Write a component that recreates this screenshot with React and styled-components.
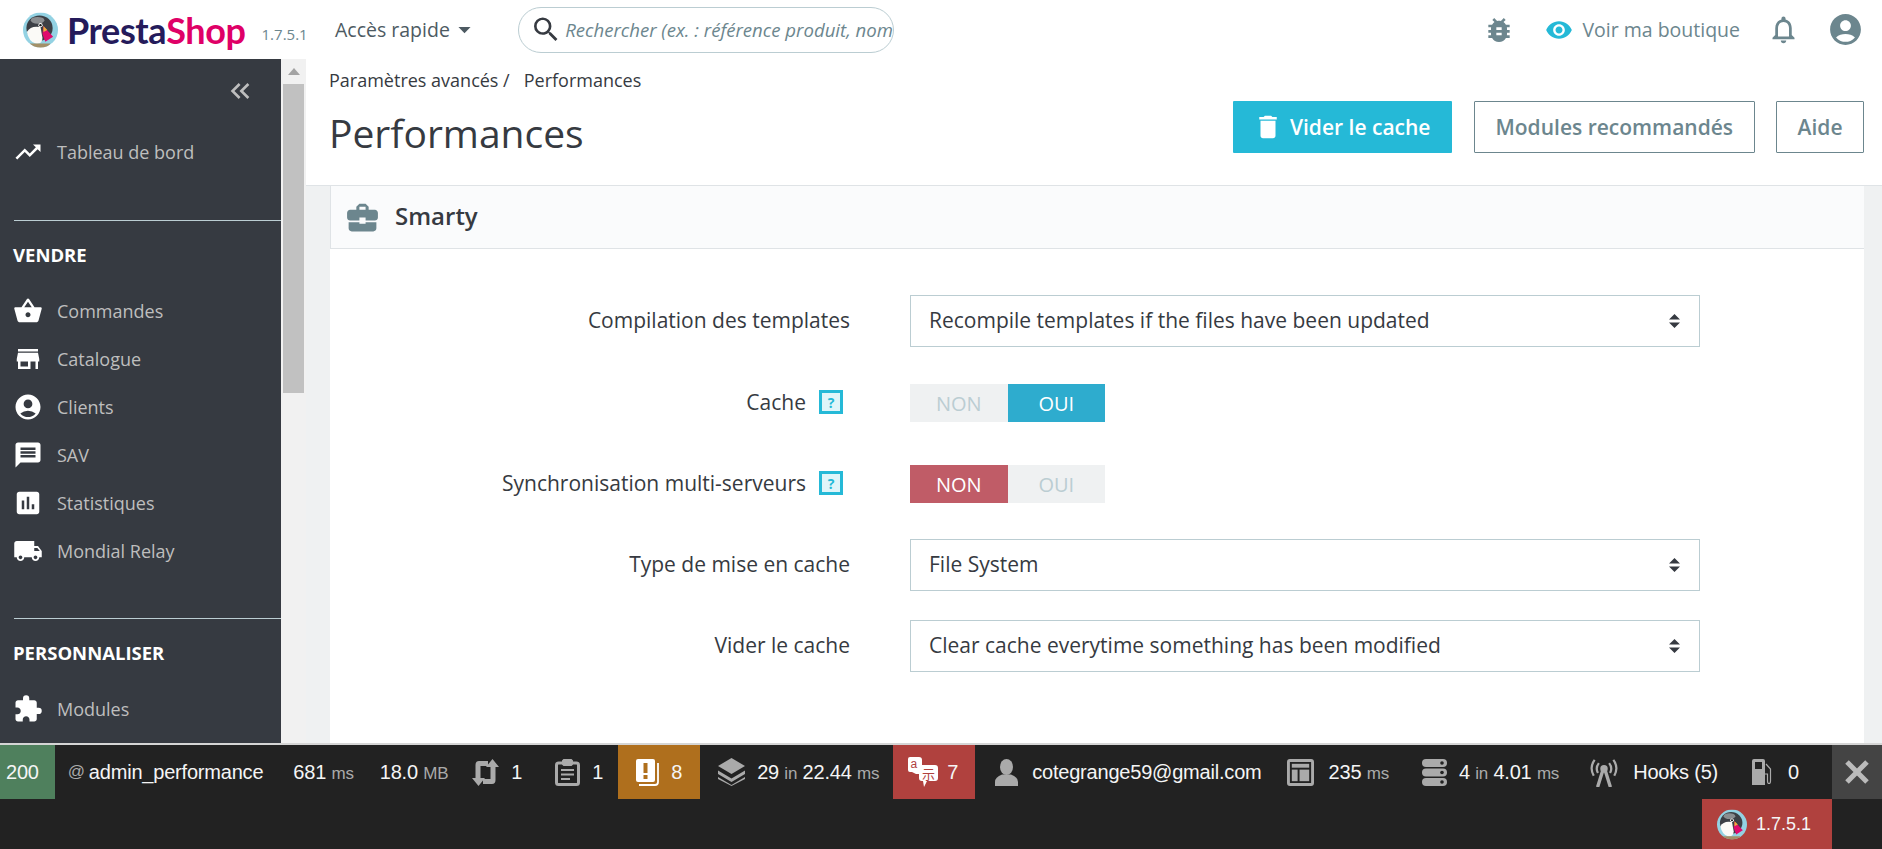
import React from 'react';
import styled, { createGlobalStyle } from 'styled-components';
import {
  MdTrendingUp, MdShoppingBasket, MdStore, MdAccountCircle, MdMessage, MdAssessment,
  MdLocalShipping, MdExtension, MdBugReport, MdVisibility, MdNotificationsNone, MdSearch,
  MdArrowDropDown, MdDelete, MdBusinessCenter, MdKeyboardDoubleArrowLeft, MdDesktopMac,
} from 'react-icons/md';

const GlobalStyle = createGlobalStyle`
  html, body { margin: 0; padding: 0; height: 100%; overflow: hidden; }
  body { font-family: "Open Sans", sans-serif; background: #fff; color: #363a41; }
  #root { height: 100%; }
`;

const Page = styled.div`
  width: 1882px;
  height: 849px;
  display: flex;
  flex-direction: column;
  overflow: hidden;
`;

const TopBar = styled.header`
  flex: 0 0 59px;
  display: flex;
  align-items: center;
  padding: 0 18px 0 23px;
  background: #fff;
`;

const Logo = styled.div`
  display: flex;
  align-items: center;
  width: 312px;
  flex: none;
`;

const LogoWord = styled.span`
  font-family: Lato, sans-serif;
  font-size: 36px;
  font-weight: 700;
  letter-spacing: -0.4px;
  line-height: 1;
  color: ${(p) => (p.$pink ? '#df0067' : '#251b5b')};
  margin-left: ${(p) => (p.$pink ? '0' : '9px')};
`;

const Version = styled.span`
  margin-left: 16px;
  font-size: 15px;
  color: #6c868e;
  padding-top: 8px;
`;

const QuickAccess = styled.div`
  display: flex;
  align-items: center;
  width: 183px;
  flex: none;
  font-size: 19.5px;
  color: #4d5a62;
`;

const SearchBox = styled.div`
  width: 376px;
  height: 46px;
  box-sizing: border-box;
  flex: none;
  border: 1px solid #bbcdd2;
  border-radius: 23px;
  display: flex;
  align-items: center;
  padding-left: 11px;
  gap: 3px;
  overflow: hidden;
  font-size: 18.6px;
  font-style: italic;
  color: #6c868e;
  white-space: nowrap;
`;

const TopRight = styled.div`
  margin-left: auto;
  display: flex;
  align-items: center;
  gap: 27px;
  color: #6c868e;
`;

const ShopLink = styled.span`
  display: flex;
  align-items: center;
  gap: 9px;
  margin-left: 3px;
  font-size: 19.5px;
  color: #6c868e;
`;

const Body = styled.div`
  flex: 1;
  display: flex;
  min-height: 0;
`;

const Sidebar = styled.nav`
  width: 281px;
  flex: none;
  background: #363a41;
  overflow: hidden;
`;

const Collapse = styled.div`
  height: 46px;
  box-sizing: border-box;
  padding: 16px 25px 0 0;
  margin-bottom: 23px;
  display: flex;
  justify-content: flex-end;
  color: #bebebe;
`;

const NavItem = styled.div`
  height: 48px;
  flex: none;
  display: flex;
  align-items: center;
  padding-left: 13px;
  gap: 14px;
  font-size: 18px;
  color: #bebebe;
  svg { color: #fff; flex: none; }
`;

const Divider = styled.hr`
  border: 0;
  height: 1px;
  background: #bbcdd2;
  margin: ${(p) => p.$top}px 0 0 14px;
`;

const NavHeading = styled.div`
  font-size: 18.5px;
  font-weight: 700;
  color: #fff;
  height: 24px;
  line-height: 24px;
  margin: 22px 0 20px 13px;
`;

const Scrollbar = styled.div`
  width: 25px;
  flex: none;
  background: #f1f1f1;
  display: flex;
  flex-direction: column;
  padding-left: 2px;
  box-sizing: border-box;
`;

const ScrollArrow = styled.div`
  height: 24px;
  flex: none;
  display: flex;
  align-items: center;
  justify-content: center;
  width: 21px;
  &::before {
    content: '';
    border-left: 6px solid transparent;
    border-right: 6px solid transparent;
    border-bottom: 7px solid #a3a3a3;
  }
`;

const ScrollThumb = styled.div`
  width: 21px;
  height: 309px;
  margin-top: 1px;
  background: #c1c1c1;
`;

const Main = styled.main`
  flex: 1;
  min-width: 0;
  display: flex;
  flex-direction: column;
  background: #eff1f2;
`;

const ContentHeader = styled.div`
  height: 126px;
  box-sizing: content-box;
  background: #fff;
  border-bottom: 1px solid #dfe3e6;
  padding: 0 18px 0 23px;
  display: flex;
  flex-direction: column;
`;

const Breadcrumb = styled.div`
  margin-top: 13px;
  font-size: 18px;
  line-height: 17px;
  color: #363a41;
  span { margin-left: 14px; }
`;

const TitleRow = styled.div`
  display: flex;
  align-items: flex-start;
  justify-content: space-between;
  margin-top: 12px;
`;

const Title = styled.h1`
  margin: 5px 0 0;
  font-size: 39px;
  font-weight: 400;
  line-height: 54px;
  color: #363a41;
`;

const Actions = styled.div`
  display: flex;
  gap: 21.5px;
`;

const ActionButton = styled.button`
  height: 52px;
  box-sizing: border-box;
  padding: ${(p) => (p.$primary ? '0 22px 0 20px' : '0 20.5px')};
  display: flex;
  align-items: center;
  gap: 7px;
  font-family: inherit;
  font-size: 21px;
  font-weight: 600;
  background: ${(p) => (p.$primary ? '#25b9d7' : '#fff')};
  color: ${(p) => (p.$primary ? '#fff' : '#6c868e')};
  border: ${(p) => (p.$primary ? '0' : '1px solid #6c868e')};
  border-radius: 1px;
`;

const Card = styled.section`
  flex: 1;
  margin: 0 18px 0 24px;
  background: #fff;
`;

const CardHeader = styled.div`
  height: 62px;
  display: flex;
  align-items: center;
  gap: 14px;
  padding-left: 13px;
  background: #fafbfc;
  border-bottom: 1px solid #dfe3e6;
  border-left: 1px solid #dfe3e6;
  font-size: 24px;
  font-weight: 600;
  color: #363a41;
  svg { color: #6c868e; }
`;

const CardTitle = styled.span`
  margin-bottom: 4px;
`;

const Form = styled.div`
  padding-top: 46px;
  display: grid;
  grid-template-columns: 520px 1fr;
  column-gap: 60px;
`;

const Label = styled.div`
  display: flex;
  align-items: center;
  justify-content: flex-end;
  gap: 13px;
  font-size: 21px;
  color: #363a41;
  height: ${(p) => p.$h}px;
  margin-bottom: ${(p) => p.$gap}px;
  padding-bottom: 2px;
  box-sizing: border-box;
  white-space: nowrap;
`;

const FormControl = styled.div`
  height: ${(p) => p.$h}px;
  margin-bottom: ${(p) => p.$gap}px;
  display: flex;
  align-items: center;
`;

const Select = styled.div`
  width: 790px;
  height: 52px;
  box-sizing: border-box;
  border: 1px solid #bbcdd2;
  display: flex;
  align-items: center;
  justify-content: space-between;
  padding: 0 18px 2px;
  font-size: 21px;
  color: #363a41;
`;

const HelpBox = styled.span`
  width: 24px;
  height: 24px;
  margin-right: 7px;
  box-sizing: border-box;
  border: 3px solid #25b9d7;
  background: #dff5f9;
  color: #25b9d7;
  font-size: 14px;
  font-weight: 700;
  display: flex;
  align-items: center;
  justify-content: center;
`;

const Switch = styled.div`
  display: flex;
  width: 195px;
  height: 38px;
`;

const SwitchOption = styled.span`
  flex: 1;
  display: flex;
  align-items: center;
  justify-content: center;
  font-size: 20px;
  background: ${(p) => p.$on || '#eff1f2'};
  color: ${(p) => (p.$on ? '#fff' : '#bbcdd2')};
`;

const DebugBar = styled.footer`
  flex: 0 0 106px;
  background: #222;
  border-top: 2px solid #d5d5d5;
  box-sizing: border-box;
  font-family: "Liberation Sans", Arial, sans-serif;
  font-size: 20px;
  color: #f5f5f5;
  display: flex;
  flex-direction: column;
  letter-spacing: -0.2px;
`;

const DebugRow = styled.div`
  height: 54px;
  flex: none;
  display: flex;
  align-items: stretch;
`;

const DebugCell = styled.div`
  display: flex;
  align-items: center;
  gap: ${(p) => p.$gap ?? 12}px;
  padding: 0 ${(p) => p.$r ?? 15}px 0 ${(p) => p.$l ?? 15}px;
  background: ${(p) => p.$bg || 'transparent'};
  white-space: pre;
  svg { flex: none; }
`;

const Unit = styled.small`
  font-size: 17px;
  color: #aaa;
`;

const CloseCell = styled.div`
  margin-left: auto;
  width: 50px;
  background: #444;
  display: flex;
  align-items: center;
  justify-content: center;
`;

const VersionBadge = styled.div`
  align-self: flex-end;
  margin-right: 50px;
  width: 130px;
  height: 50px;
  box-sizing: border-box;
  background: #b0413e;
  display: flex;
  align-items: center;
  gap: 9px;
  padding-left: 15px;
  font-size: 18px;
  letter-spacing: 0;
`;

const grey = '#aaa';

const Puffin = ({ w, h }) => (
  <svg width={w} height={h} viewBox="0 0 36 36">
    <defs>
      <clipPath id="puffin-clip"><circle cx="18" cy="18" r="18" /></clipPath>
    </defs>
    <g clipPath="url(#puffin-clip)">
      <rect width="36" height="36" fill="#93d2e3" />
      <ellipse cx="17" cy="16" rx="13.5" ry="13" fill="#3c3f45" />
      <ellipse cx="15" cy="8" rx="7" ry="3.5" fill="#8a8d90" />
      <path d="M4 20 Q8 13 18 15 L20 26 Q20 33 13 32 Q6 30 4 20Z" fill="#fbfaf7" />
      <circle cx="18" cy="13" r="2.2" fill="#fff" />
      <circle cx="18" cy="13" r="1.2" fill="#111" />
      <path d="M21 14 L31 25 L23 30 L20 22Z" fill="#df0a6c" />
      <path d="M21 14 L25 18 L21 20Z" fill="#e8b23a" />
      <path d="M7 32 H28 L26 37 H9Z" fill="#a39068" />
    </g>
  </svg>
);

const SortIcon = () => (
  <svg width="13" height="16" viewBox="0 0 13 16" fill="#363a41" style={{ marginTop: 2 }}>
    <path d="M6.5 1 L12 6.5 H1Z M6.5 15 L1 9.5 H12Z" />
  </svg>
);

const RetweetIcon = () => (
  <svg width="27" height="27" viewBox="0 0 27 27" fill={grey}>
    <path d="M20.5 0 L27 8 H23.5 V21 Q23.5 25 20 25 H11 V20 H18.5 V8 H14Z" />
    <path d="M6.5 27 L0 19 H3.5 V6 Q3.5 2 7 2 H16 V7 H8.5 V19 H13Z" />
  </svg>
);

const LogIcon = () => (
  <svg width="25" height="27" viewBox="0 0 25 27" fill="none" stroke={grey}>
    <rect x="1.5" y="4" width="22" height="21.5" rx="2" strokeWidth="3" />
    <rect x="7.5" y="0.5" width="10" height="6" rx="1.5" fill={grey} strokeWidth="1" />
    <path d="M6 11 H19 M6 15.5 H19 M6 20 H15" strokeWidth="2.2" />
  </svg>
);

const BookAlertIcon = () => (
  <svg width="23" height="27" viewBox="0 0 23 27" fill="#fff">
    <path d="M2 0 H17 Q19 0 19 2 V21 Q19 23 17 23 H2 Q0 23 0 21 V2 Q0 0 2 0Z" />
    <path d="M22 4 V23 Q22 26 19 26 H3" fill="none" stroke="#fff" strokeWidth="1.8" />
    <rect x="7.5" y="4" width="4" height="10" fill="#af6f1d" />
    <rect x="7.5" y="16" width="4" height="4" fill="#af6f1d" />
  </svg>
);

const LayersIcon = () => (
  <svg width="27" height="28" viewBox="0 0 27 28" fill={grey}>
    <path d="M13.5 0 L27 8 L13.5 16 L0 8Z" />
    <path d="M0 12.5 L13.5 20.5 L27 12.5 V16 L13.5 24 L0 16Z" />
    <path d="M0 19 L13.5 27 L27 19 V21 L13.5 28 L0 21Z" />
  </svg>
);

const TranslateIcon = () => (
  <svg width="30" height="30" viewBox="0 0 30 30">
    <path d="M2 0 H11 Q14 0 14 3 V14 Q14 17 11 17 H8 L4 15 H2 Q0 15 0 13 V2 Q0 0 2 0Z" fill="#fff" />
    <text x="2.5" y="11" fontSize="12" fontFamily="Liberation Sans, sans-serif" fill="#b0413e">a</text>
    <path d="M14 8 H27 Q30 8 30 11 V21 Q30 24 27 24 H19 L16 30 L15 24 H14 Q11 24 11 21 V11 Q11 8 14 8Z" fill="#fff" />
    <text x="14" y="22" fontSize="13" fontFamily="Noto Sans CJK JP, sans-serif" fill="#b0413e">示</text>
  </svg>
);

const UserIcon = () => (
  <svg width="23" height="27" viewBox="0 0 23 27" fill={grey}>
    <ellipse cx="11.5" cy="8" rx="6.5" ry="8" />
    <path d="M0 27 V23 Q0 18 7 15.5 H16 Q23 18 23 23 V27Z" />
  </svg>
);

const TemplateIcon = () => (
  <svg width="27" height="27" viewBox="0 0 28 28" fill={grey}>
    <path fillRule="evenodd" d="M3 0 H25 Q28 0 28 3 V25 Q28 28 25 28 H3 Q0 28 0 25 V3 Q0 0 3 0Z M3 3 V25 H25 V3Z" />
    <rect x="5" y="5" width="18" height="4" />
    <rect x="5" y="11" width="6" height="12" />
    <rect x="13" y="11" width="10" height="12" />
  </svg>
);

const ServerIcon = () => (
  <svg width="25" height="27" viewBox="0 0 25 27" fill={grey}>
    <rect x="0" y="0" width="25" height="8" rx="4" />
    <rect x="0" y="9.5" width="25" height="8" rx="4" />
    <rect x="0" y="19" width="25" height="8" rx="4" />
    <circle cx="20" cy="4" r="1.8" fill="#222" />
    <circle cx="20" cy="13.5" r="1.8" fill="#222" />
    <circle cx="20" cy="23" r="1.8" fill="#222" />
  </svg>
);

const AntennaIcon = () => (
  <svg width="28" height="29" viewBox="0 0 30 31" fill="none" stroke={grey} strokeWidth="2.4">
    <circle cx="15" cy="11.5" r="4" fill={grey} stroke="none" />
    <path d="M13.5 14 L8.5 30 M16.5 14 L21.5 30" strokeWidth="3.6" strokeLinecap="round" />
    <path d="M8.5 16 Q5.5 10.5 9.5 5.5 M21.5 16 Q24.5 10.5 20.5 5.5 M4 19 Q-1 10 5 2 M26 19 Q31 10 25 2" />
  </svg>
);

const FuelIcon = () => (
  <svg width="20" height="26" viewBox="0 0 20 26" fill={grey}>
    <path fillRule="evenodd" d="M0 2 Q0 0 2 0 H11 Q13 0 13 2 V26 H0Z M3 3 V10 H10 V3Z" />
    <path d="M14 5 L18.5 10 V22 Q18.5 24.5 17 24.5 Q15.5 24.5 15.5 22 V15 H13" fill="none" stroke={grey} strokeWidth="1.2" />
  </svg>
);

const navGroup = [
  [MdShoppingBasket, 'Commandes'],
  [MdStore, 'Catalogue'],
  [MdAccountCircle, 'Clients'],
  [MdMessage, 'SAV'],
  [MdAssessment, 'Statistiques'],
  [MdLocalShipping, 'Mondial Relay'],
];

const App = () => (
  <Page>
    <GlobalStyle />
    <TopBar>
      <Logo>
        <Puffin w={35} h={36} />
        <LogoWord>Presta</LogoWord>
        <LogoWord $pink>Shop</LogoWord>
        <Version>1.7.5.1</Version>
      </Logo>
      <QuickAccess>Accès rapide<MdArrowDropDown size={29} /></QuickAccess>
      <SearchBox>
        <MdSearch size={33} color="#363a41" />
        Rechercher (ex. : référence produit, nom
      </SearchBox>
      <TopRight>
        <MdBugReport size={32} />
        <ShopLink><MdVisibility size={28} color="#25b9d7" />Voir ma boutique</ShopLink>
        <MdNotificationsNone size={33} />
        <MdAccountCircle size={37} />
      </TopRight>
    </TopBar>
    <Body>
      <Sidebar>
        <Collapse><MdKeyboardDoubleArrowLeft size={32} /></Collapse>
        <NavItem><MdTrendingUp size={30} />Tableau de bord</NavItem>
        <Divider $top={44} />
        <NavHeading>VENDRE</NavHeading>
        {navGroup.map(([Icon, label]) => (
          <NavItem key={label}><Icon size={30} />{label}</NavItem>
        ))}
        <Divider $top={43} />
        <NavHeading>PERSONNALISER</NavHeading>
        <NavItem><MdExtension size={30} />Modules</NavItem>
        <NavItem><MdDesktopMac size={30} /></NavItem>
      </Sidebar>
      <Scrollbar>
        <ScrollArrow />
        <ScrollThumb />
      </Scrollbar>
      <Main>
        <ContentHeader>
          <Breadcrumb>Paramètres avancés&nbsp;/<span>Performances</span></Breadcrumb>
          <TitleRow>
            <Title>Performances</Title>
            <Actions>
              <ActionButton $primary><MdDelete size={30} />Vider le cache</ActionButton>
              <ActionButton>Modules recommandés</ActionButton>
              <ActionButton>Aide</ActionButton>
            </Actions>
          </TitleRow>
        </ContentHeader>
        <Card>
          <CardHeader><MdBusinessCenter size={37} /><CardTitle>Smarty</CardTitle></CardHeader>
          <Form>
            <Label $h={52} $gap={36}>Compilation des templates</Label>
            <FormControl $h={52} $gap={36}>
              <Select>Recompile templates if the files have been updated<SortIcon /></Select>
            </FormControl>
            <Label $h={40} $gap={41}>Cache <HelpBox>?</HelpBox></Label>
            <FormControl $h={40} $gap={41}>
              <Switch><SwitchOption>NON</SwitchOption><SwitchOption $on="#2eacce">OUI</SwitchOption></Switch>
            </FormControl>
            <Label $h={40} $gap={35}>Synchronisation multi-serveurs <HelpBox>?</HelpBox></Label>
            <FormControl $h={40} $gap={35}>
              <Switch><SwitchOption $on="#c05c67">NON</SwitchOption><SwitchOption>OUI</SwitchOption></Switch>
            </FormControl>
            <Label $h={52} $gap={29}>Type de mise en cache</Label>
            <FormControl $h={52} $gap={29}>
              <Select>File System<SortIcon /></Select>
            </FormControl>
            <Label $h={52} $gap={29}>Vider le cache</Label>
            <FormControl $h={52} $gap={29}>
              <Select>Clear cache everytime something has been modified<SortIcon /></Select>
            </FormControl>
          </Form>
        </Card>
      </Main>
    </Body>
    <DebugBar>
      <DebugRow>
        <DebugCell $bg="#4f805d" $l={6} $r={16}>200</DebugCell>
        <DebugCell $gap={4} $l={13}><Unit>@</Unit>admin_performance</DebugCell>
        <DebugCell $r={14}><span>681 <Unit>ms</Unit></span></DebugCell>
        <DebugCell $l={12} $r={11}><span>18.0 <Unit>MB</Unit></span></DebugCell>
        <DebugCell $l={13} $r={16}><RetweetIcon />1</DebugCell>
        <DebugCell $l={17} $r={15}><LogIcon />1</DebugCell>
        <DebugCell $bg="#af6f1d" $l={18} $r={18}><BookAlertIcon />8</DebugCell>
        <DebugCell $l={18} $r={14}><LayersIcon /><span>29 <Unit>in</Unit> 22.44 <Unit>ms</Unit></span></DebugCell>
        <DebugCell $bg="#b0413e" $gap={9} $r={17}><TranslateIcon />7</DebugCell>
        <DebugCell $l={20} $gap={14} $r={12}><UserIcon />cotegrange59@gmail.com</DebugCell>
        <DebugCell $l={13} $r={16} $gap={15}><TemplateIcon /><span>235 <Unit>ms</Unit></span></DebugCell>
        <DebugCell $l={17} $r={12} $gap={12}><ServerIcon /><span>4 <Unit>in</Unit> 4.01 <Unit>ms</Unit></span></DebugCell>
        <DebugCell $l={19} $r={12} $gap={15}><AntennaIcon />Hooks (5)</DebugCell>
        <DebugCell $l={22} $r={12} $gap={16}><FuelIcon />0</DebugCell>
        <CloseCell>
          <svg width="24" height="24" viewBox="0 0 24 24" stroke="#bbb" strokeWidth="5"><path d="M2 2 L22 22 M22 2 L2 22" /></svg>
        </CloseCell>
      </DebugRow>
      <VersionBadge><Puffin w={30} h={31} />1.7.5.1</VersionBadge>
    </DebugBar>
  </Page>
);

export default App;
